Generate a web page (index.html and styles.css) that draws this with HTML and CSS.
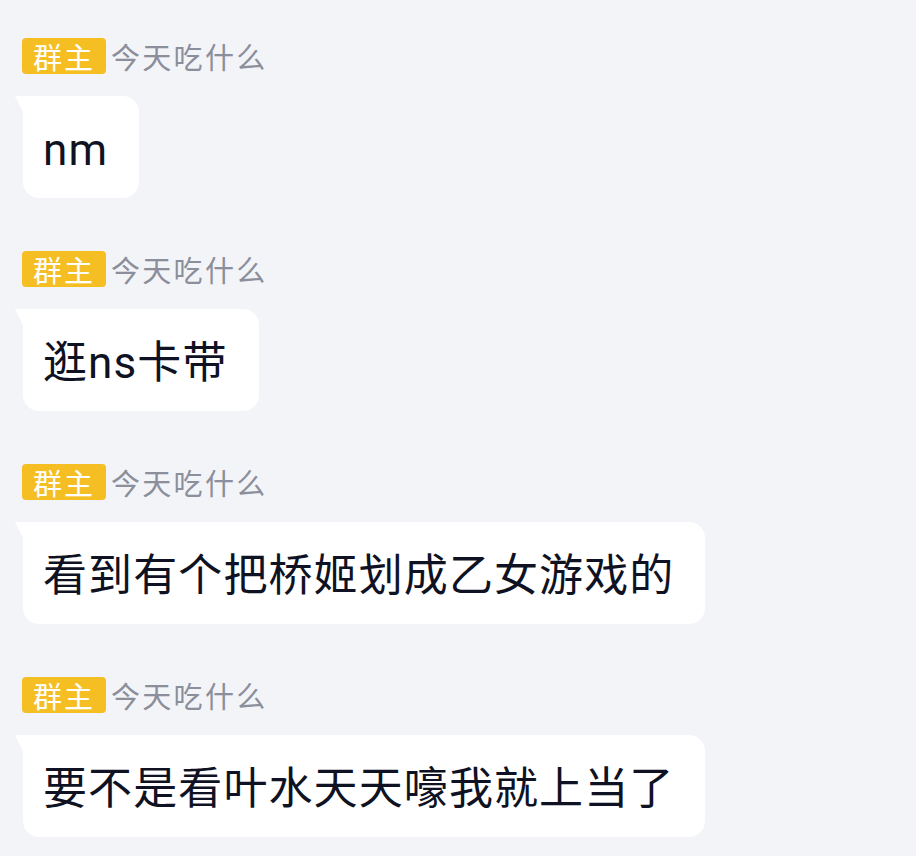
FILE: index.html
```html
<!DOCTYPE html>
<html lang="zh">
<head>
<meta charset="utf-8">
<link rel="stylesheet" href="styles.css">
</head>
<body>
<div class="chat">
  <div class="msg">
    <div class="meta"><span class="badge">群主</span><span class="name">今天吃什么</span></div>
    <div class="bubble">nm</div>
  </div>
  <div class="msg">
    <div class="meta"><span class="badge">群主</span><span class="name">今天吃什么</span></div>
    <div class="bubble">逛ns卡带</div>
  </div>
  <div class="msg">
    <div class="meta"><span class="badge">群主</span><span class="name">今天吃什么</span></div>
    <div class="bubble">看到有个把桥姬划成乙女游戏的</div>
  </div>
  <div class="msg">
    <div class="meta"><span class="badge">群主</span><span class="name">今天吃什么</span></div>
    <div class="bubble">要不是看叶水天天嚎我就上当了</div>
  </div>
</div>
</body>
</html>
```
FILE: styles.css
```css
html, body {
  margin: 0;
  padding: 0;
  background: #f3f4f8;
}
body {
  font-family: Roboto, "Noto Sans CJK SC", sans-serif;
  width: 916px;
  height: 856px;
  overflow: hidden;
}
.chat {
  display: flex;
  flex-direction: column;
  gap: 53px;
  padding: 38px 0 0 22px;
}
.msg {
  display: flex;
  flex-direction: column;
  align-items: flex-start;
  gap: 22px;
}
.meta {
  display: flex;
  align-items: center;
  gap: 5px;
  height: 36px;
}
.badge {
  background: #f5bf24;
  color: #ffffff;
  border-radius: 4px;
  font-size: 29px;
  line-height: 36px;
  height: 36px;
  padding: 0 11px;
  letter-spacing: 2px;
  font-family: "Noto Sans CJK SC", sans-serif;
}
.name {
  color: #8b8e9b;
  font-size: 29px;
  letter-spacing: 2.3px;
  font-family: "Noto Sans CJK SC", sans-serif;
  line-height: 36px;
}
.bubble {
  position: relative;
  margin-left: 1px;
  background: #ffffff;
  color: #0f1222;
  font-size: 44px;
  letter-spacing: 1.1px;
  line-height: 54px;
  padding: 27px 31px 21px 20px;
  border-radius: 0 16px 16px 16px;
}
.bubble::before {
  content: "";
  position: absolute;
  left: -8px;
  top: 0;
  width: 9px;
  height: 18px;
  background: #ffffff;
  clip-path: polygon(0 0, 100% 0, 100% 100%);
}
```
